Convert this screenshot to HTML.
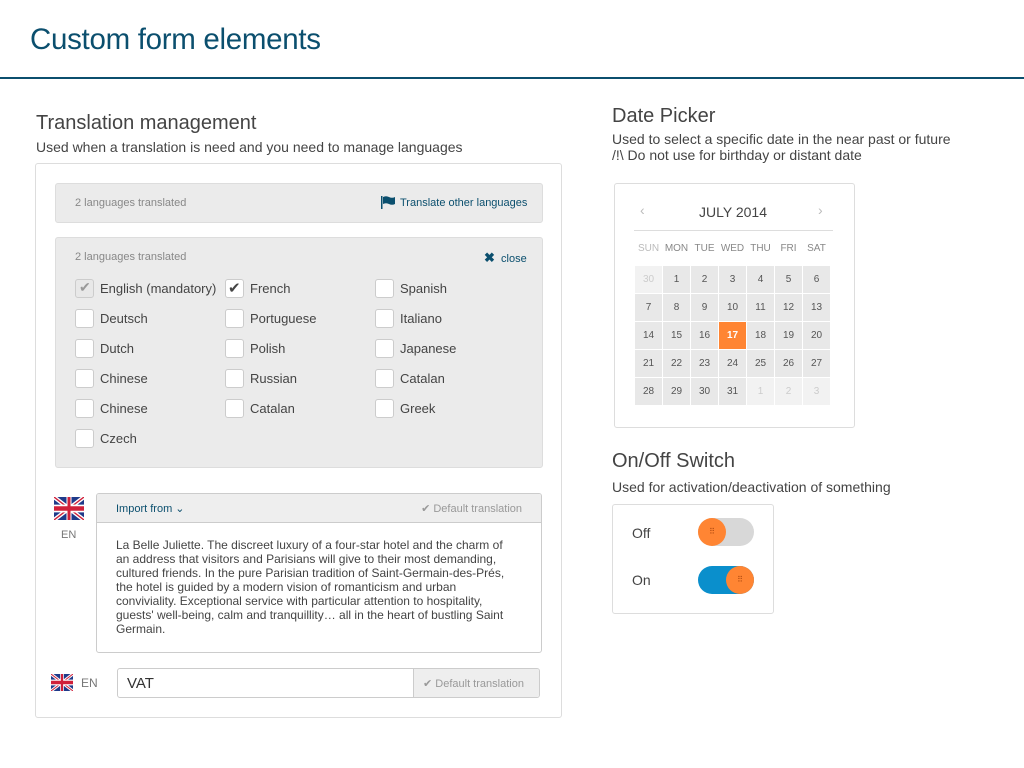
<!DOCTYPE html>
<html><head><meta charset="utf-8"><style>
*{box-sizing:border-box;margin:0;padding:0}
body{width:1024px;height:768px;background:#fff;font-family:"Liberation Sans",sans-serif;color:#444;position:relative;overflow:hidden}
.a{position:absolute}
h1{position:absolute;left:30px;top:23px;font-size:29.5px;font-weight:normal;color:#0b4f6e;letter-spacing:-0.3px}
.hr{position:absolute;left:0;top:77px;width:1024px;height:2px;background:#0b4f6e}
h2{position:absolute;font-size:20px;font-weight:normal;color:#444}
.sub{position:absolute;font-size:14px;color:#444;line-height:16px}
.panel{border:1px solid #ddd;border-radius:3px;background:#fff}
.bar{background:#ebebeb;border:1px solid #ddd;border-radius:3px}
.small{font-size:11px;color:#888}
.cb{position:absolute;width:19px;height:19px;border:1px solid #ccc;border-radius:3px;background:#fff}
.lbl{position:absolute;font-size:13px;color:#444}
.cal td{width:28px;height:28px;background:#e8e8e8;text-align:center;font-size:10px;color:#555;border:1px solid #fff;padding:0}
.cal td.g{background:#f2f2f2;color:#ccc}
.cal td.s{background:#ff8533;color:#fff;font-weight:bold}
.cal th{font-size:10px;font-weight:normal;color:#888;height:32px}
</style></head><body>
<h1>Custom form elements</h1>
<div class="hr"></div>

<h2 style="left:36px;top:112px">Translation management</h2>
<div class="sub" style="left:36px;top:139px">Used when a translation is need and you need to manage languages</div>

<div class="a panel" style="left:35px;top:163px;width:527px;height:555px"></div>
<div class="a bar" style="left:55px;top:183px;width:488px;height:40px"></div>
<div class="a small" style="left:75px;top:197px">2 languages translated</div>
<svg class="a" style="left:381px;top:196px" width="15" height="13" viewBox="0 0 15 13"><rect x="0" y="0" width="1.5" height="13" fill="#0b4f6e"/><path d="M2 1 Q5 -0.5 8 1 T14 1 V8 Q11 9.5 8 8 T2 8Z" fill="#0b4f6e"/></svg>
<div class="a" style="left:400px;top:197px;font-size:11px;color:#0b4f6e">Translate other languages</div>

<div class="a bar" style="left:55px;top:237px;width:488px;height:231px"></div>
<div class="a small" style="left:75px;top:251px">2 languages translated</div>
<div class="a" style="left:484px;top:250px;font-size:11px;color:#0b4f6e"><b style="font-size:13px">✖</b>&nbsp; close</div>

<div class="cb" style="left:75px;top:279px;background:#e8e8e8"></div><div class="a" style="left:79px;top:279px;font-size:14px;color:#999">✔</div><div class="lbl" style="left:100px;top:281px">English (mandatory)</div>
<div class="cb" style="left:225px;top:279px"></div><div class="a" style="left:228px;top:279px;font-size:15px;color:#444">✔</div><div class="lbl" style="left:250px;top:281px">French</div>
<div class="cb" style="left:375px;top:279px"></div><div class="lbl" style="left:400px;top:281px">Spanish</div>
<div class="cb" style="left:75px;top:309px"></div><div class="lbl" style="left:100px;top:311px">Deutsch</div>
<div class="cb" style="left:225px;top:309px"></div><div class="lbl" style="left:250px;top:311px">Portuguese</div>
<div class="cb" style="left:375px;top:309px"></div><div class="lbl" style="left:400px;top:311px">Italiano</div>
<div class="cb" style="left:75px;top:339px"></div><div class="lbl" style="left:100px;top:341px">Dutch</div>
<div class="cb" style="left:225px;top:339px"></div><div class="lbl" style="left:250px;top:341px">Polish</div>
<div class="cb" style="left:375px;top:339px"></div><div class="lbl" style="left:400px;top:341px">Japanese</div>
<div class="cb" style="left:75px;top:369px"></div><div class="lbl" style="left:100px;top:371px">Chinese</div>
<div class="cb" style="left:225px;top:369px"></div><div class="lbl" style="left:250px;top:371px">Russian</div>
<div class="cb" style="left:375px;top:369px"></div><div class="lbl" style="left:400px;top:371px">Catalan</div>
<div class="cb" style="left:75px;top:399px"></div><div class="lbl" style="left:100px;top:401px">Chinese</div>
<div class="cb" style="left:225px;top:399px"></div><div class="lbl" style="left:250px;top:401px">Catalan</div>
<div class="cb" style="left:375px;top:399px"></div><div class="lbl" style="left:400px;top:401px">Greek</div>
<div class="cb" style="left:75px;top:429px"></div><div class="lbl" style="left:100px;top:431px">Czech</div>

<svg class="a" style="left:54px;top:497px" width="30" height="23" viewBox="0 0 60 30" preserveAspectRatio="none"><rect width="60" height="30" fill="#1f3a8a"/><path d="M0 0L60 30M60 0L0 30" stroke="#fff" stroke-width="6"/><path d="M0 0L60 30M60 0L0 30" stroke="#d0203a" stroke-width="2"/><path d="M30 0V30M0 15H60" stroke="#fff" stroke-width="10"/><path d="M30 0V30M0 15H60" stroke="#d0203a" stroke-width="6"/></svg>
<div class="a" style="left:61px;top:529px;font-size:11px;color:#777">EN</div>

<div class="a" style="left:96px;top:493px;width:446px;height:160px;border:1px solid #ccc;border-radius:3px;background:#fff;overflow:hidden">
 <div style="height:29px;background:#eee;border-bottom:1px solid #ccc;position:relative">
  <div class="a" style="left:19px;top:8px;font-size:11px;color:#0b4f6e">Import from &#8964;</div>
  <div class="a" style="right:19px;top:8px;font-size:11px;color:#999">✔ Default translation</div>
 </div>
 <div style="padding:15px 19px 0 19px;font-size:12px;line-height:14px;color:#444;width:440px">La Belle Juliette. The discreet luxury of a four-star hotel and the charm of an address that visitors and Parisians will give to their most demanding, cultured friends. In the pure Parisian tradition of Saint-Germain-des-Prés, the hotel is guided by a modern vision of romanticism and urban conviviality. Exceptional service with particular attention to hospitality, guests' well-being, calm and tranquillity… all in the heart of bustling Saint Germain.</div>
</div>

<svg class="a" style="left:51px;top:674px" width="22" height="17" viewBox="0 0 60 30" preserveAspectRatio="none"><rect width="60" height="30" fill="#1f3a8a"/><path d="M0 0L60 30M60 0L0 30" stroke="#fff" stroke-width="6"/><path d="M0 0L60 30M60 0L0 30" stroke="#d0203a" stroke-width="2"/><path d="M30 0V30M0 15H60" stroke="#fff" stroke-width="10"/><path d="M30 0V30M0 15H60" stroke="#d0203a" stroke-width="6"/></svg>
<div class="a" style="left:81px;top:676px;font-size:12px;color:#777">EN</div>
<div class="a" style="left:117px;top:668px;width:423px;height:30px;border:1px solid #ccc;border-radius:3px;background:#fff;overflow:hidden">
 <div class="a" style="left:9px;top:6px;font-size:15px;color:#333">VAT</div>
 <div class="a" style="left:295px;top:0;width:127px;height:28px;background:#eee;border-left:1px solid #ccc;font-size:11px;color:#999;padding:8px 0 0 9px">✔ Default translation</div>
</div>

<h2 style="left:612px;top:105px">Date Picker</h2>
<div class="sub" style="left:612px;top:131px">Used to select a specific date in the near past or future<br>/!\ Do not use for birthday or distant date</div>

<div class="a panel" style="left:614px;top:183px;width:241px;height:245px"></div>
<div class="a" style="left:640px;top:202px;font-size:14px;color:#bbb">‹</div>
<div class="a" style="left:818px;top:202px;font-size:14px;color:#bbb">›</div>
<div class="a" style="left:634px;top:204px;width:198px;text-align:center;font-size:14px;color:#444">JULY 2014</div>
<div class="a" style="left:634px;top:230px;width:199px;height:1px;background:#ddd"></div>
<table class="a cal" style="left:634px;top:233px;border-collapse:collapse">
<tr><th style="color:#bbb">SUN</th><th>MON</th><th>TUE</th><th>WED</th><th>THU</th><th>FRI</th><th>SAT</th></tr>
<tr><td class="g">30</td><td>1</td><td>2</td><td>3</td><td>4</td><td>5</td><td>6</td></tr>
<tr><td>7</td><td>8</td><td>9</td><td>10</td><td>11</td><td>12</td><td>13</td></tr>
<tr><td>14</td><td>15</td><td>16</td><td class="s">17</td><td>18</td><td>19</td><td>20</td></tr>
<tr><td>21</td><td>22</td><td>23</td><td>24</td><td>25</td><td>26</td><td>27</td></tr>
<tr><td>28</td><td>29</td><td>30</td><td>31</td><td class="g">1</td><td class="g">2</td><td class="g">3</td></tr>
</table>

<h2 style="left:612px;top:450px">On/Off Switch</h2>
<div class="sub" style="left:612px;top:479px">Used for activation/deactivation of something</div>
<div class="a panel" style="left:612px;top:504px;width:162px;height:110px"></div>
<div class="a" style="left:632px;top:525px;font-size:14px;color:#444">Off</div>
<div class="a" style="left:698px;top:518px;width:56px;height:28px;border-radius:14px;background:#d8d8d8"></div>
<div class="a" style="left:698px;top:518px;width:28px;height:28px;border-radius:14px;background:#ff8533;color:#b04a10;font-size:8px;text-align:center;line-height:28px">⠿</div>
<div class="a" style="left:632px;top:572px;font-size:14px;color:#444">On</div>
<div class="a" style="left:698px;top:566px;width:56px;height:28px;border-radius:14px;background:#0a8fcc"></div>
<div class="a" style="left:726px;top:566px;width:28px;height:28px;border-radius:14px;background:#ff8533;color:#b04a10;font-size:8px;text-align:center;line-height:28px">⠿</div>
</body></html>
